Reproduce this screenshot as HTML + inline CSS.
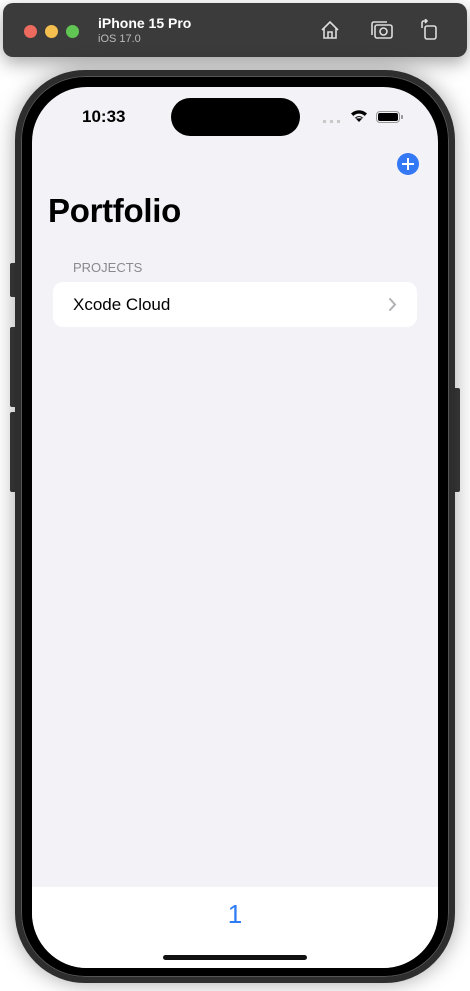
<!DOCTYPE html>
<html><head><meta charset="utf-8"><style>
*{margin:0;padding:0;box-sizing:border-box}
body{width:470px;height:991px;background:#fff;position:relative;overflow:hidden;font-family:"Liberation Sans",sans-serif}
.tb{position:absolute;left:3px;top:3px;width:464px;height:54px;background:#3b3b3b;border-radius:10px;box-shadow:0 6px 18px rgba(0,0,0,.35)}
.dot{position:absolute;top:22px;width:13px;height:13px;border-radius:50%}
.btn{position:absolute;width:5px;background:#3a3a3a;border-radius:2px 0 0 2px}
.phone{position:absolute;left:15px;top:70px;width:440px;height:913px;border-radius:70px;background:#000;border:6px solid #2e2e2e;box-shadow:0 0 22px rgba(0,0,0,.35),inset 0 0 0 1px #555}
.screen{position:absolute;left:32px;top:87px;width:406px;height:881px;border-radius:55px;background:#f2f2f7;overflow:hidden}
</style></head><body>
<div class="tb">
 <div class="dot" style="left:21px;background:#ec6a5e"></div>
 <div class="dot" style="left:42px;background:#f4bf4f"></div>
 <div class="dot" style="left:63px;background:#61c554"></div>
 <div style="position:absolute;left:95px;top:12px;color:#fff;font-weight:bold;font-size:14px">iPhone 15 Pro</div>
 <div style="position:absolute;left:95px;top:30px;color:#bbb;font-size:11px">iOS 17.0</div>
 <svg style="position:absolute;left:316px;top:16px" width="22" height="22" viewBox="0 0 22 22" fill="none" stroke="#ddd" stroke-width="1.6"><path d="M3 11 L11 3 L19 11 M5 9 V19 H17 V9 M9 19 V13 H13 V19"/></svg>
 <svg style="position:absolute;left:367px;top:16px" width="24" height="22" viewBox="0 0 24 22" fill="none" stroke="#ddd" stroke-width="1.6"><rect x="5" y="6" width="17" height="13" rx="2"/><path d="M2 16 V5 Q2 3 4 3 H17"/><circle cx="13.5" cy="12.5" r="3.5"/></svg>
 <svg style="position:absolute;left:416px;top:16px" width="20" height="22" viewBox="0 0 20 22" fill="none" stroke="#ddd" stroke-width="1.6"><rect x="6" y="7" width="11" height="13" rx="2"/><path d="M3 9 V4 Q3 2 5 2 H8 M6 0 L8 2 L6 4"/></svg>
</div>
<div class="btn" style="left:10px;top:263px;height:34px"></div>
<div class="btn" style="left:10px;top:327px;height:80px"></div>
<div class="btn" style="left:10px;top:412px;height:80px"></div>
<div class="btn" style="left:455px;top:388px;height:104px;border-radius:0 2px 2px 0"></div>
<div class="phone"></div>
<div class="screen">
 <div style="position:absolute;left:139px;top:11px;width:129px;height:38px;border-radius:19px;background:#000"></div>
 <div style="position:absolute;left:50px;top:20px;font-size:17px;font-weight:bold;color:#000">10:33</div>
 <div style="position:absolute;left:291px;top:33px;width:17px;height:3px;border-top:3px dotted #c8c8c8"></div>
 <svg style="position:absolute;left:318px;top:22px" width="18" height="14" viewBox="0 0 18 14"><path d="M9 13 L1 4.5 A11.5 11.5 0 0 1 17 4.5 Z" fill="#000"/><path d="M3.3 7 A8 8 0 0 1 14.7 7 L13 8.8 A5.6 5.6 0 0 0 5 8.8Z M5.6 9.4 A4.8 4.8 0 0 1 12.4 9.4" fill="#f2f2f7"/></svg>
 <div style="position:absolute;left:344px;top:24px;width:24px;height:12px;border:1px solid #999;border-radius:4px;padding:1px"><div style="width:100%;height:100%;background:#000;border-radius:2px"></div></div>
 <div style="position:absolute;left:369px;top:28px;width:2px;height:4px;background:#999;border-radius:0 1px 1px 0"></div>
 <div style="position:absolute;left:365px;top:66px;width:22px;height:22px;border-radius:50%;background:#3478f6"></div>
 <div style="position:absolute;left:370px;top:76px;width:12px;height:2px;background:#fff"></div>
 <div style="position:absolute;left:375px;top:71px;width:2px;height:12px;background:#fff"></div>
 <div style="position:absolute;left:16px;top:105px;font-size:33px;font-weight:bold;color:#000;letter-spacing:-.3px">Portfolio</div>
 <div style="position:absolute;left:41px;top:173px;font-size:13px;color:#8a8a8e">PROJECTS</div>
 <div style="position:absolute;left:21px;top:195px;width:364px;height:45px;background:#fff;border-radius:10px">
  <div style="position:absolute;left:20px;top:13px;font-size:17px;color:#000">Xcode Cloud</div>
  <svg style="position:absolute;left:335px;top:15px" width="9" height="15" viewBox="0 0 9 15" fill="none" stroke="#b0b0b5" stroke-width="2" stroke-linecap="round"><path d="M2 2 L7 7.5 L2 13"/></svg>
 </div>
 <div style="position:absolute;left:0;top:800px;width:406px;height:81px;background:#fff">
  <div style="position:absolute;left:0;width:406px;text-align:center;top:12px;font-size:26px;color:#2f7cf6">1</div>
  <div style="position:absolute;left:131px;top:68px;width:144px;height:5px;border-radius:3px;background:#111"></div>
 </div>
</div>
</body></html>
